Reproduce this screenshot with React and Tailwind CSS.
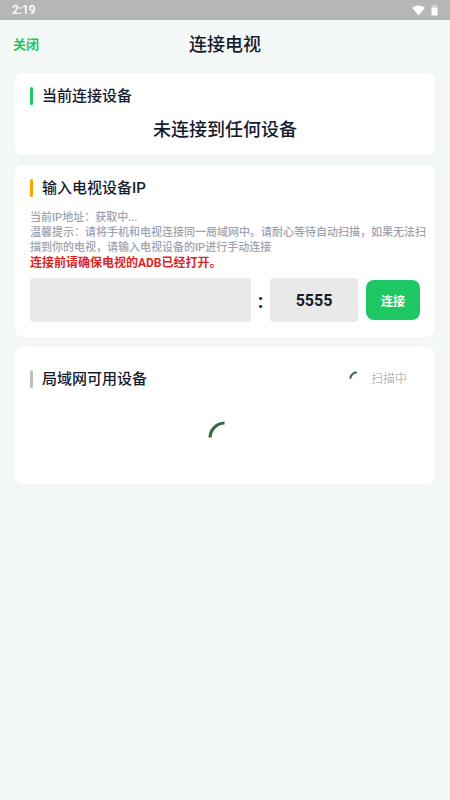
import { useState } from 'react';

const StatusBar = () => (
  <div className="flex h-5 items-center justify-between bg-[#b5b7b6] px-3 text-white">
    <span className="text-[12px] leading-5 font-medium">2:19</span>
    <div className="flex items-center gap-1.5">
      <svg width="13" height="11" viewBox="0 0 13 11" fill="currentColor" aria-hidden="true">
        <path d="M6.5 10.5 0.2 3C1.9 1.4 4.1 0.4 6.5 0.4s4.6 1 6.3 2.6z" />
      </svg>
      <svg width="7" height="12" viewBox="0 0 7 12" aria-hidden="true">
        <path d="M2.2 0.5h2.6v1.1H6.5v2.6H0.5V1.6h1.7z" fill="#d5d6d6" />
        <path d="M0.5 3.8h6v7.7h-6z" fill="currentColor" />
      </svg>
    </div>
  </div>
);

const SectionTitle = ({ barClass, children }) => (
  <div className="flex items-center gap-2">
    <span className={`h-[18px] w-[3px] rounded-xs ${barClass}`} />
    <h2 className="pl-px text-[15px] leading-[18px] font-medium">{children}</h2>
  </div>
);

const Spinner = ({ className, strokeWidth }) => (
  <svg className={className} viewBox="0 0 36 36" fill="none" aria-hidden="true">
    <path d="M3 17.5A15 15 0 0 1 17.5 3" stroke="#336b48" strokeWidth={strokeWidth} />
  </svg>
);

const App = () => {
  const [ip, setIp] = useState('');
  const [port, setPort] = useState('5555');

  return (
    <div className="min-h-screen bg-[#f3f7f6] font-[Roboto,'Noto_Sans_CJK_SC',sans-serif] text-[#151b2c]">
      <StatusBar />

      <header className="grid h-[53px] grid-cols-[1fr_auto_1fr] items-center px-[13px] pb-1">
        <button type="button" className="justify-self-start text-[13px] leading-5 font-bold text-[#1cc764]">
          关闭
        </button>
        <h1 className="text-[18px] leading-6 font-medium">连接电视</h1>
      </header>

      <main className="flex flex-col gap-2.5 px-[15px]">
        <section className="rounded-lg bg-white px-[15px] pt-3.5 pb-3">
          <SectionTitle barClass="bg-[#1cc764]">当前连接设备</SectionTitle>
          <p className="mt-3 text-center text-[18px] leading-[26px] font-medium">未连接到任何设备</p>
        </section>

        <section className="rounded-lg bg-white px-[15px] pt-3.5 pb-[15px]">
          <SectionTitle barClass="bg-[#ffa200]">输入电视设备IP</SectionTitle>
          <div className="mt-[13px] -mr-2 text-[11px] leading-[15px] font-medium text-[#9ca3af]">
            <p>当前IP地址：获取中...</p>
            <p>
              温馨提示：请将手机和电视连接同一局域网中。请耐心等待自动扫描，如果无法扫描到你的电视，请输入电视设备的IP进行手动连接
            </p>
            <p className="text-[12px] leading-[17px] font-bold text-[#dc2626]">连接前请确保电视的ADB已经打开。</p>
          </div>
          <form className="mt-1.5 flex items-center" onSubmit={(e) => e.preventDefault()}>
            <input
              type="text"
              aria-label="IP地址"
              value={ip}
              onChange={(e) => setIp(e.target.value)}
              className="h-11 min-w-0 flex-1 rounded-[3px] bg-[#e9e9e9] px-3 text-center text-[16px] font-bold outline-none"
            />
            <span className="w-[19px] pt-0.5 text-center text-[20px] leading-6 font-bold">:</span>
            <input
              type="text"
              aria-label="端口"
              value={port}
              onChange={(e) => setPort(e.target.value)}
              className="h-11 w-[88px] rounded-[3px] bg-[#e9e9e9] text-center text-[16px] font-bold outline-none"
            />
            <button
              type="submit"
              className="ml-2 h-10 w-[54px] rounded-lg bg-[#1cc764] pt-1 text-[12px] font-bold text-white"
            >
              连接
            </button>
          </form>
        </section>

        <section className="rounded-lg bg-white px-[15px] pt-[22px] pb-7">
          <div className="flex items-center justify-between pr-[13px]">
            <SectionTitle barClass="bg-[#bdbdbd]">局域网可用设备</SectionTitle>
            <div className="flex items-center gap-1.5">
              <Spinner className="size-4" strokeWidth={4.5} />
              <span className="text-[12px] leading-5 font-light text-[#9a9a9a]">扫描中</span>
            </div>
          </div>
          <div className="mt-[31px] flex justify-center">
            <Spinner className="size-9" strokeWidth={3.2} />
          </div>
        </section>
      </main>
    </div>
  );
};

export default App;
